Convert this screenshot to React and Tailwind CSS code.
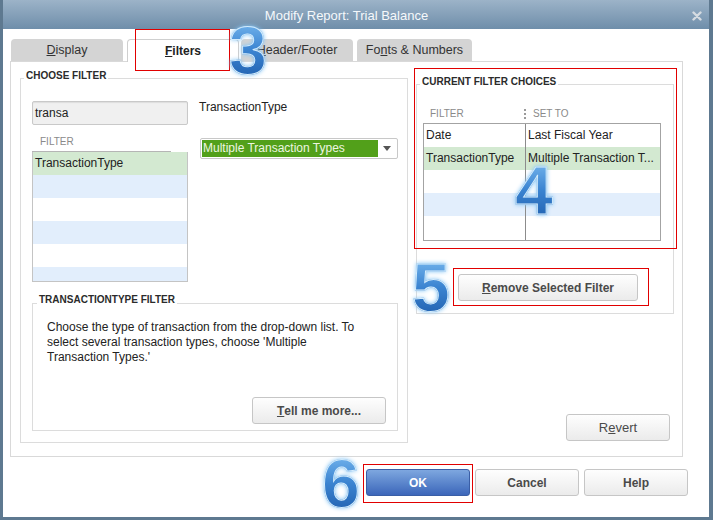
import React from 'react';

const font = "font-['Liberation_Sans',Arial,sans-serif]";

function Step({ n, className }) {
  return (
    <div
      className={`pointer-events-none absolute z-30 text-[68px] font-bold leading-none bg-linear-to-b from-[#7ebef2] via-[#3b84d1] to-[#1d5cab] bg-clip-text text-transparent [-webkit-text-stroke:1px_#d4ecfc] drop-shadow-[0_0_2px_#86c6f6] ${className}`}
    >
      {n}
    </div>
  );
}

function RedBox({ className }) {
  return <div className={`pointer-events-none absolute z-20 border border-[#e10000] ${className}`} />;
}

function Legend({ children, className = '' }) {
  return (
    <div className={`w-fit bg-white px-[2px] text-[10px] font-bold leading-[12px] text-[#2b2b2b] ${className}`}>
      {children}
    </div>
  );
}

function Btn({ children, className = '' }) {
  return (
    <div
      className={`flex items-center justify-center rounded-[3px] border border-[#c6c6c6] bg-linear-to-b from-[#fefefe] to-[#ebebeb] text-[12px] font-bold text-[#4a4a4a] ${className}`}
    >
      {children}
    </div>
  );
}

function Tab({ children, className = '' }) {
  return (
    <div
      className={`flex h-[22px] items-center justify-center rounded-t-[4px] bg-[#d4d4d4] text-[12.5px] text-[#333] ${className}`}
    >
      {children}
    </div>
  );
}

const leftRows = ['bg-[#d3e9d1]', 'bg-[#e2eefc]', 'bg-white', 'bg-[#e2eefc]', 'bg-white', 'bg-[#e2eefc]'];

const choices = [
  { f: 'Date', s: 'Last Fiscal Year', bg: 'bg-white' },
  { f: 'TransactionType', s: 'Multiple Transaction T...', bg: 'bg-[#d3e9d1]' },
  { f: '', s: '', bg: 'bg-white' },
  { f: '', s: '', bg: 'bg-[#e2eefc]' },
  { f: '', s: '', bg: 'bg-white' },
];

export default function App() {
  return (
    <div className={`relative h-[521px] w-[713px] overflow-hidden bg-white ${font}`}>
      <div className="flex h-[520px] flex-col border-x-[3px] border-b-[3px] border-r-[4px] border-[#5e7990]">
        {/* title bar */}
        <div className="flex h-[29px] shrink-0 items-center bg-linear-to-b from-[#9cb3c8] to-[#6f8eaa] pt-[3px]">
          <div className="flex-1 pr-[2px] text-center text-[13px] text-[#f5f8fb]">Modify Report: Trial Balance</div>
          <div className="pr-[7px]">
            <svg width="10" height="10" viewBox="0 0 10 10">
              <path d="M1.5 1.5 L8.5 8.5 M8.5 1.5 L1.5 8.5" stroke="#d5dbe1" strokeWidth="2.4" strokeLinecap="round" />
            </svg>
          </div>
        </div>

        {/* body */}
        <div className="flex flex-1 flex-col pt-[10px] text-[#222]">
          {/* tabs */}
          <div className="ml-[8px] flex h-[22px] items-end">
            <Tab className="w-[112px]">
              <span className="underline">D</span>isplay
            </Tab>
            <div className="relative z-10 -mb-px ml-[4px] flex h-[23px] w-[112px] items-center justify-center rounded-t-[4px] border border-b-0 border-[#cfcfcf] bg-white text-[12px] font-bold text-[#222]">
              <span className="underline">F</span>ilters
            </div>
            <Tab className="ml-[2px] w-[112px]">
              <span className="underline">H</span>eader/Footer
            </Tab>
            <Tab className="ml-[4px] w-[115px]">
              Fo<span className="underline">n</span>ts &amp; Numbers
            </Tab>
          </div>

          {/* tab panel */}
          <div className="ml-[7px] flex h-[396px] w-[673px] border border-[#d9d9d9]">
            {/* choose filter */}
            <div className="ml-[9px] mt-[16px] flex h-[365px] w-[388px] flex-col border border-[#dcdcdc]">
              <Legend className="-mt-[9px] ml-[3px]">CHOOSE FILTER</Legend>
              <div className="flex flex-col pl-[11px] pt-[19px]">
                <div className="flex items-start">
                  <div className="flex h-[24px] w-[156px] items-center rounded-[2px] border border-[#c9c9c9] bg-[#f0f0f0] px-[2px] text-[12px] shadow-[inset_0_1px_1px_rgba(0,0,0,0.08)]">
                    transa
                  </div>
                  <div className="-mt-px ml-[11px] text-[12px] leading-[15px]">TransactionType</div>
                </div>

                <div className="flex">
                  <div className="flex w-[156px] flex-col">
                    <div className="flex h-[27px] w-[139px] items-end border-b border-[#b5b5b5] pb-[3px] pl-[8px] text-[10px] leading-[12px] text-[#8a8a8a]">
                      FILTER
                    </div>
                    <div className="h-[130px] overflow-hidden border-x border-b border-[#c4c4c4]">
                      {leftRows.map((bg, i) => (
                        <div key={i} className={`h-[23px] pl-[2px] text-[12px] leading-[23px] ${bg}`}>
                          {i === 0 ? 'TransactionType' : ''}
                        </div>
                      ))}
                    </div>
                  </div>
                  <div className="ml-[12px] mt-[13px] flex h-[21px] w-[198px] rounded-[2px] border border-[#c8c8c8] p-[1px]">
                    <div className="h-[17px] w-[176px] bg-[#52a01a] pl-[1px] text-[12px] leading-[17px] text-[#eef6e0]">
                      Multiple Transaction Types
                    </div>
                    <div className="flex flex-1 items-center justify-center">
                      <svg width="8" height="5" viewBox="0 0 8 5">
                        <path d="M0 0 H8 L4 5 Z" fill="#555" />
                      </svg>
                    </div>
                  </div>
                </div>

                <div className="mt-[21px] flex h-[128px] w-[366px] flex-col border border-[#dcdcdc]">
                  <Legend className="-mt-[10px] ml-[4px]">TRANSACTIONTYPE FILTER</Legend>
                  <p className="mt-[14px] whitespace-nowrap pl-[14px] text-[12px] leading-[15px] text-[#222]">
                    Choose the type of transaction from the drop-down list. To
                    <br />
                    select several transaction types, choose 'Multiple
                    <br />
                    Transaction Types.'
                  </p>
                  <div className="mb-[6px] mr-[11px] mt-auto flex justify-end">
                    <Btn className="h-[27px] w-[134px]">
                      <span className="underline">T</span>ell me more...
                    </Btn>
                  </div>
                </div>
              </div>
            </div>

            {/* right column */}
            <div className="ml-[8px] flex w-[258px] flex-col">
              <div className="mt-[22px] flex h-[230px] w-[258px] flex-col border border-[#dcdcdc]">
                <Legend className="-mt-[9px] ml-[3px]">CURRENT FILTER CHOICES</Legend>
                <div className="flex h-[35px] items-end pb-[3px] text-[10px] leading-[12px] text-[#8a8a8a]">
                  <div className="w-[107px] pl-[13px]">FILTER</div>
                  <div className="mb-[1px] h-[10px] border-l-2 border-dotted border-[#9a9a9a]" />
                  <div className="pl-[7px]">SET TO</div>
                </div>
                <div className="ml-[6px] h-[118px] w-[238px] overflow-hidden border border-[#a3a3a3]">
                  {choices.map((r, i) => (
                    <div key={i} className={`flex h-[23px] text-[12px] leading-[23px] ${r.bg}`}>
                      <div className="w-[102px] border-r border-[#8c8c8c] pl-[2px]">{r.f}</div>
                      <div className="flex-1 whitespace-nowrap pl-[2px]">{r.s}</div>
                    </div>
                  ))}
                  <div className="h-px w-[102px] border-r border-[#8c8c8c]" />
                </div>
                <Btn className="ml-[41px] mt-[33px] h-[27px] w-[180px]">
                  <span className="underline">R</span>emove Selected Filter
                </Btn>
              </div>
              <Btn className="ml-[150px] mt-[100px] h-[27px] w-[104px] font-normal text-[13px]">
                R<span className="underline">e</span>vert
              </Btn>
            </div>
          </div>

          {/* footer buttons */}
          <div className="mt-[12px] flex justify-end gap-[5px] pr-[21px]">
            <div className="flex h-[27px] w-[104px] items-center justify-center rounded-[3px] border border-[#3a5ea6] bg-linear-to-b from-[#7ea7df] to-[#3c66ba] text-[12px] font-bold text-white">
              OK
            </div>
            <Btn className="h-[27px] w-[104px]">Cancel</Btn>
            <Btn className="h-[27px] w-[104px]">Help</Btn>
          </div>
        </div>
      </div>

      {/* annotations */}
      <RedBox className="left-[135px] top-[29px] h-[42px] w-[95px]" />
      <RedBox className="left-[414px] top-[68px] h-[181px] w-[263px]" />
      <RedBox className="left-[453px] top-[268px] h-[38px] w-[196px]" />
      <RedBox className="left-[363px] top-[464px] h-[39px] w-[110px]" />
      <Step n="3" className="left-[229px] top-[16px]" />
      <Step n="4" className="left-[515px] top-[156px]" />
      <Step n="5" className="left-[412px] top-[253px]" />
      <Step n="6" className="left-[322px] top-[449px]" />
    </div>
  );
}
